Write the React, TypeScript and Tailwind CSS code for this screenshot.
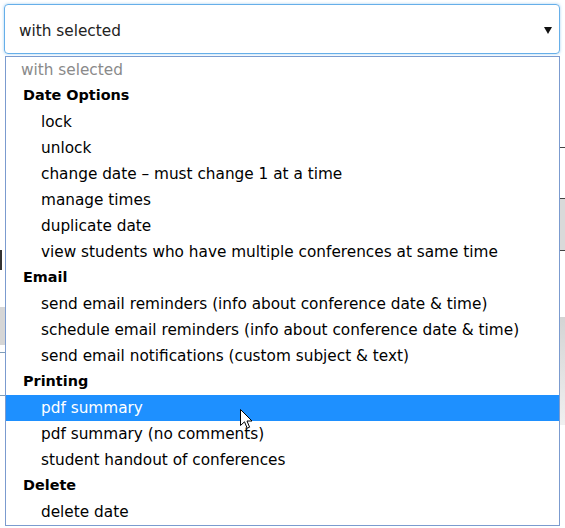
import React from 'react';

type Row = { label: string; kind: 'placeholder' | 'group' | 'option'; active?: boolean };

const rows: Row[] = [
  { label: 'with selected', kind: 'placeholder' },
  { label: 'Date Options', kind: 'group' },
  { label: 'lock', kind: 'option' },
  { label: 'unlock', kind: 'option' },
  { label: 'change date – must change 1 at a time', kind: 'option' },
  { label: 'manage times', kind: 'option' },
  { label: 'duplicate date', kind: 'option' },
  { label: 'view students who have multiple conferences at same time', kind: 'option' },
  { label: 'Email', kind: 'group' },
  { label: 'send email reminders (info about conference date & time)', kind: 'option' },
  { label: 'schedule email reminders (info about conference date & time)', kind: 'option' },
  { label: 'send email notifications (custom subject & text)', kind: 'option' },
  { label: 'Printing', kind: 'group' },
  { label: 'pdf summary', kind: 'option', active: true },
  { label: 'pdf summary (no comments)', kind: 'option' },
  { label: 'student handout of conferences', kind: 'option' },
  { label: 'Delete', kind: 'group' },
  { label: 'delete date', kind: 'option' },
];

function OptionRow({ row }: { row: Row }) {
  if (row.kind === 'placeholder') {
    return <div className="h-[26px] flex items-center pl-[15px] text-[#8a8a8a]">{row.label}</div>;
  }
  if (row.kind === 'group') {
    return <div className="h-[26px] flex items-center pl-[17px] font-bold text-[14.4px] text-black">{row.label}</div>;
  }
  return (
    <div
      className={
        row.active
          ? 'h-[26px] flex items-center pl-[35px] bg-[#1e90ff] text-white'
          : 'h-[26px] flex items-center pl-[35px] text-black'
      }
    >
      {row.label}
    </div>
  );
}

function Cursor() {
  return (
    <svg width="13" height="21" viewBox="0 0 13 21" className="absolute left-[240px] top-[409px]">
      <path
        d="M0.5 0.5 L0.5 16.5 L4.5 12.8 L7.2 19.2 L9.6 18.2 L7 12 L12 12 Z"
        fill="white"
        stroke="black"
        strokeWidth="1"
        strokeLinejoin="miter"
      />
    </svg>
  );
}

export default function App() {
  return (
    <div className="relative w-[565px] h-[528px] overflow-hidden bg-white font-['DejaVu_Sans',sans-serif] text-[15.3px]">
      <div className="pt-[4px] pl-[4px]">
        <div className="w-[556px] h-[50px] flex items-center justify-between pt-[4px] pl-[14px] pr-[7px] rounded-[4px] border border-[#66afe9] shadow-[0_0_3px_rgba(102,175,233,0.6)] text-[#222]">
          <span>with selected</span>
          <svg width="8" height="7" viewBox="0 0 8 7" className="-mt-[2px]">
            <path d="M0 0 H8 L4 7 Z" fill="#111" />
          </svg>
        </div>
      </div>

      {/* page content behind the open list, only its edges show */}
      <div className="mt-[2px] flex">
        <div className="w-[5px] flex flex-col">
          <div className="h-[194px]" />
          <div className="h-[20px] border-l-2 border-[#333]" />
          <div className="h-[37px]" />
          <div className="h-[38px] bg-[#d6d6d6]" />
          <div className="h-[7px]" />
          <div className="h-px bg-[#7f9db9]" />
          <div className="h-[42px]" />
          <div className="h-px bg-[#7f9db9]" />
        </div>
        <div className="flex-1" />
        <div className="w-[5px] flex flex-col">
          <div className="h-[91px]" />
          <div className="h-px bg-[#444]" />
          <div className="h-[50px]" />
          <div className="h-px bg-[#444]" />
          <div className="h-[51px] bg-[#d9d9d9]" />
          <div className="h-px bg-[#444]" />
          <div className="h-[66px]" />
          <div className="h-[108px] bg-gradient-to-b from-[#d4d4d4] to-[#f0f0f0]" />
        </div>
      </div>

      <div className="absolute left-[5px] top-[56px] w-[555px] border border-[#7b9bcf] bg-white">
        {rows.map((row) => (
          <OptionRow key={row.label} row={row} />
        ))}
      </div>

      <Cursor />
    </div>
  );
}
